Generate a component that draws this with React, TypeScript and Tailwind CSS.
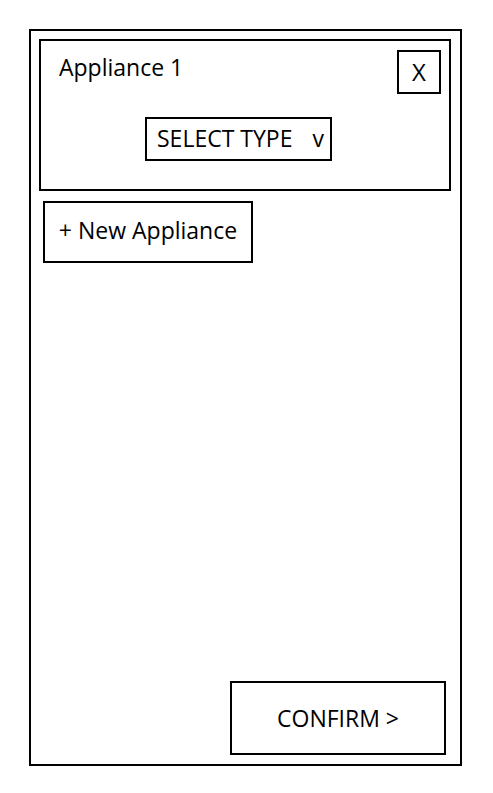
import React from "react";

export default function App() {
  return (
    <div
      className="min-h-screen bg-white text-black pl-[29px] pt-[29px]"
      style={{ fontFamily: '"Open Sans", "Liberation Sans", sans-serif' }}
    >
      <div className="w-[433px] h-[737px] border-2 border-black flex flex-col">
        {/* Appliance card */}
        <div className="mt-[8px] ml-[8px] w-[412px] h-[152px] border-2 border-black flex flex-col">
          <div className="flex items-start justify-between pl-[18px] pr-[8px] pt-[9px]">
            <span className="text-[23px] leading-[31px] mt-[2px]">Appliance 1</span>
            <button className="w-[44px] h-[44px] border-2 border-black flex items-center justify-center text-[24px] leading-none">
              X
            </button>
          </div>
          <div className="mt-[23px] ml-[104px]">
            <button className="w-[187px] h-[44px] border-2 border-black flex items-center pl-[10px] pb-[2px] text-[23px] leading-[31px]">
              <span>SELECT TYPE</span>
              <span className="ml-[20px]">v</span>
            </button>
          </div>
        </div>

        {/* New appliance */}
        <button className="mt-[10px] ml-[12px] w-[210px] h-[62px] border-2 border-black flex items-center justify-center pb-[4px] text-[23px] leading-[31px]">
          + New Appliance
        </button>

        <div className="flex-1" />

        {/* Confirm */}
        <button className="self-end mr-[14px] mb-[9px] w-[216px] h-[74px] border-2 border-black flex items-center justify-center text-[23px] leading-[31px]">
          CONFIRM &gt;
        </button>
      </div>
    </div>
  );
}
